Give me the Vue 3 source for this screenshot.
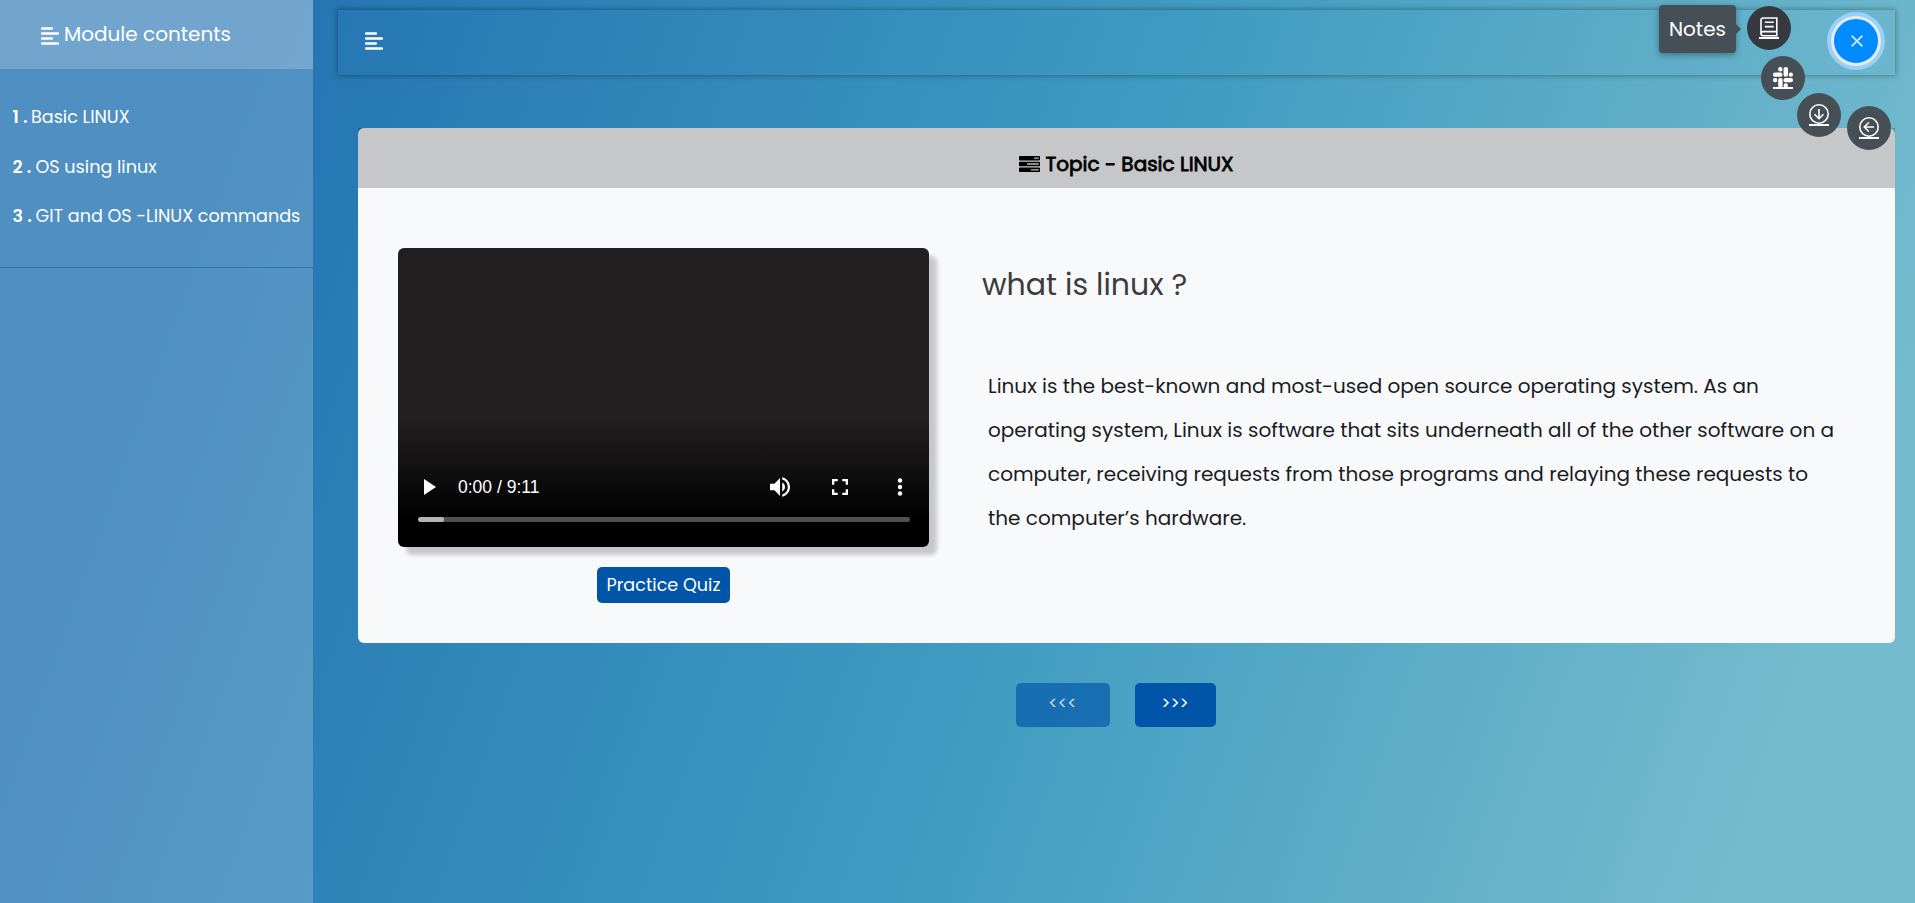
<script setup>
const modules = ['Basic LINUX', 'OS using linux', 'GIT and OS -LINUX commands']
</script>

<template>
  <div class="page">
    <aside class="sidebar">
      <header class="side-head">
        <svg class="bars" viewBox="0 0 18 18"><path d="M1 1.5h10M1 6.5h16M1 11.5h10M1 16.5h16" /></svg>
        <span>Module contents</span>
      </header>
      <ul class="modules">
        <li v-for="(name, i) in modules" :key="name" :class="'item-' + (i + 1)">
          <b>{{ i + 1 }} .</b><a>{{ name }}</a>
        </li>
      </ul>
    </aside>

    <main class="content">
      <nav class="topbar">
        <svg class="bars" viewBox="0 0 18 18"><path d="M1 1.5h10M1 6.5h16M1 11.5h10M1 16.5h16" /></svg>
      </nav>

      <section class="card">
        <header class="card-head">
          <svg class="tasks" viewBox="0 0 21 16">
            <rect width="21" height="4.4" rx=".8" /><rect y="5.8" width="21" height="4.4" rx=".8" /><rect y="11.6" width="21" height="4.4" rx=".8" />
            <path d="M15 2.2h4.7M8 8h11.7M12 13.8h7.7" />
          </svg>
          <span>Topic - Basic LINUX</span>
        </header>
        <div class="card-body">
          <div class="media">
            <div class="video">
              <div class="controls">
                <svg class="play" viewBox="0 0 12 16"><path d="M0 0L12 8L0 16z" /></svg>
                <span class="time">0:00 / 9:11</span>
                <svg class="volume" viewBox="3 3 18 18"><path d="M3 9v6h4l5 5V4L7 9H3zm13.500 3c0-1.770-1.020-3.290-2.500-4.030v8.050c1.480-.73 2.500-2.250 2.500-4.020zM14 3.230v2.060c2.890.86 5 3.540 5 6.710s-2.110 5.850-5 6.710v2.060c4.010-.91 7-4.490 7-8.770s-2.990-7.860-7-8.770z" /></svg>
                <svg class="full" viewBox="5 5 14 14"><path d="M7 14H5v5h5v-2H7v-3zm-2-4h2V7h3V5H5v5zm12 7h-3v2h5v-5h-2v3zM14 5v2h3v3h2V5h-5z" /></svg>
                <svg class="dots" viewBox="0 0 6 18"><circle cx="3" cy="2.500" r="2.200" /><circle cx="3" cy="9" r="2.200" /><circle cx="3" cy="15.500" r="2.200" /></svg>
              </div>
              <div class="track"><i></i></div>
            </div>
            <button class="quiz">Practice Quiz</button>
          </div>
          <article class="text">
            <h2>what is linux ?</h2>
            <p>
              Linux is the best-known and most-used open source operating system. As an
              operating system, Linux is software that sits underneath all of the other software on a
              computer, receiving requests from those programs and relaying these requests to
              the computer’s hardware.
            </p>
          </article>
        </div>
      </section>

      <div class="pager">
        <button class="prev" disabled>&lt;&lt;&lt;</button>
        <button class="next">&gt;&gt;&gt;</button>
      </div>
    </main>

    <div class="fab-menu">
      <div class="tooltip">Notes</div>
      <a class="fab notes">
        <svg viewBox="0 0 20 22"><path d="M17.800 1H4.200Q2 1 2 3.200V16.500Q2 18.700 4.200 18.700H17.800zM2 16.800Q2 14.600 4.200 14.600H17.800M5.800 5.300h9M5.800 9.600h9" /><path class="rule" d="M0 21h20" /></svg>
      </a>
      <a class="fab slack">
        <svg viewBox="0 0 20 22"><g class="solid"><rect x="5.200" y="0" width="4.300" height="4.500" rx="2" /><rect x="0" y="5.400" width="9.500" height="4.400" rx="2" /><rect x="10.600" y="0" width="4.400" height="9.800" rx="2" /><rect x="15.700" y="5.400" width="4.300" height="4.400" rx="2" /><rect x="0" y="10.900" width="4.300" height="4.400" rx="2" /><rect x="5.200" y="10.900" width="4.400" height="9.800" rx="2" /><rect x="10.500" y="10.900" width="9.500" height="4.400" rx="2" /><rect x="10.600" y="16.200" width="4.300" height="4.500" rx="2" /></g><path class="rule" d="M0 21h20" /></svg>
      </a>
      <a class="fab down">
        <svg viewBox="0 0 20 22"><circle cx="10" cy="10" r="9.200" /><path d="M10 5v9.500M5.500 10.200l4.500 4.500l4.500-4.500" /><path class="rule" d="M0 21h20" /></svg>
      </a>
      <a class="fab back">
        <svg viewBox="0 0 20 22"><circle cx="10" cy="10" r="9.200" /><path d="M15 10H5.500M9.800 5.500L5.300 10l4.500 4.500" /><path class="rule" d="M0 21h20" /></svg>
      </a>
      <button class="close"><svg viewBox="0 0 12 12"><path d="M.6.6l10.800 10.800M11.400.6L.6 11.400" /></svg></button>
    </div>
  </div>
</template>

<style>
html, body { margin: 0; overflow: hidden; }
</style>
<style scoped>
* { box-sizing: border-box; }
.page {
  position: relative; display: flex; width: 100%; height: 903px; overflow: hidden;
  font-family: Poppins, Inter, "Open Sans", sans-serif; color: #fff;
  background: linear-gradient(109.6deg, #2373b2 11.2%, #3f9bc1 53.7%, #74bbcd 91.1%);
}
span, a, b { white-space: nowrap; }
button { border: 0; padding: 0; font: inherit; color: #fff; }
.sidebar { width: 313px; height: 903px; background: rgba(255,255,255,.2); flex: none; }
.side-head { height: 69px; padding: 0 0 1px 41px; display: flex; align-items: center; background: rgba(255,255,255,.2); font-size: 20px; }
.bars { width: 18px; height: 18px; fill: none; stroke: #fff; stroke-width: 2.300; stroke-linecap: round; flex: none; }
.side-head .bars { margin: 3px 5px 0 0; }
.modules { list-style: none; margin: 0; padding: 23px 0 0 12px; height: 199px; border-bottom: 1px solid #31789a; font-size: 17.600px; }
.modules li { display: flex; align-items: center; height: 49.500px; }
.modules li.item-2 { padding-top: 1px; }
.modules b { width: 23.500px; padding-left: .5px; font-weight: 600; }
.modules li.item-1 b { width: 19px; }
.content { flex: 1; display: flex; flex-direction: column; padding: 10px 20px 0 25px; }
.topbar { height: 65px; padding: 22px 0 0 27px; box-shadow: 0 0 5px 1px rgba(0,0,0,.3); }
.card { margin: 53px 0 0 20px; height: 515px; background: #f8f9fb; border-radius: 6px; }
.card-head { height: 60px; padding: 11px 0 0; display: flex; align-items: center; justify-content: center; gap: 5px; background: rgba(0,0,0,.2); color: #000; font-size: 20px; }
.card-head span { -webkit-text-stroke: .8px #000; }
.tasks { width: 21px; height: 16px; }
.tasks path { stroke: #bbb; stroke-width: 1.300; }
.card-body { display: flex; padding: 60px 40px 0; }
.media { width: 531px; display: flex; flex: none; flex-direction: column; align-items: center; }
.video { width: 531px; height: 299px; border-radius: 6px; display: flex; flex-direction: column; justify-content: flex-end; background: linear-gradient(#221f20 0 57%, #000 91%); box-shadow: 8px 8px 4px rgba(0,0,0,.2); }
.controls { display: flex; align-items: center; height: 20px; padding-left: 26px; fill: #fff; margin-bottom: 20px; }
.play { width: 12px; height: 16px; }
.time { font: 17.500px "Liberation Sans", Arial, sans-serif; margin-left: 22px; width: 312px; }
.volume { width: 20px; height: 20px; margin-right: 42px; }
.full { width: 16px; height: 16px; margin-right: 49px; }
.dots { width: 6px; height: 18px; }
.track { height: 5px; margin: 0 19px 25px 20px; border-radius: 3px; background: #505050; overflow: hidden; }
.track i { display: block; width: 26px; height: 5px; background: #b4b4b4; border-radius: 2px; }
.quiz { margin-top: 20px; width: 133px; height: 36px; padding-bottom: 1px; border-radius: 5px; background: #0055a8; font-size: 17.600px; }
.text { flex: 1; padding: 15px 0 0 53px; color: #1a1c1e; }
h2 { margin: 0; font-size: 30px; font-weight: 400; line-height: 44px; color: #3c3c3c; }
p { max-width: 852px; margin: 57px 0 0 6px; font-size: 20px; line-height: 44px; }
.pager { display: flex; gap: 25px; padding: 40px 0 0 678px; }
.pager button { height: 44px; padding: 0 1px 4px 0; border-radius: 5px; background: #0055a8; font-size: 17px; }
.prev { width: 94px; opacity: .65; }
.next { width: 81px; }
.fab-menu { position: absolute; top: 0; right: 0; width: 275px; height: 170px; }
.fab { position: absolute; width: 44px; height: 44px; border-radius: 50%; background: #474f56; display: flex; align-items: center; justify-content: center; }
.fab svg { width: 20px; height: 22px; fill: none; stroke: #fff; stroke-width: 1.600; }
.fab .solid { fill: #fff; stroke: none; }
.rule { stroke-width: 2; }
.notes { left: 107px; top: 6px; background: #343a40; }
.slack { left: 121px; top: 56px; }
.down { left: 157px; top: 93px; }
.back { left: 207px; top: 106px; }
.tooltip { position: absolute; left: 19px; top: 5px; width: 77px; height: 48px; border-radius: 4px; background: #474f56; display: flex; align-items: center; justify-content: center; font-size: 20px; box-shadow: 0 2px 6px rgba(0,0,0,.35); }
.tooltip::after { content: ""; position: absolute; left: 77px; top: 19px; border: 5px solid transparent; border-left-color: #474f56; border-right: 0; }
.close { position: absolute; left: 191px; top: 16px; width: 50px; height: 50px; border-radius: 50%; border: 3px solid #e8eaed; background: #008cff; box-shadow: 0 0 0 4px #99d1fb; display: flex; align-items: center; justify-content: center; }
.close svg { width: 12px; height: 12px; margin: -1px 0 0 1px; fill: none; stroke: #d9edff; stroke-width: 1.600; }
</style>
